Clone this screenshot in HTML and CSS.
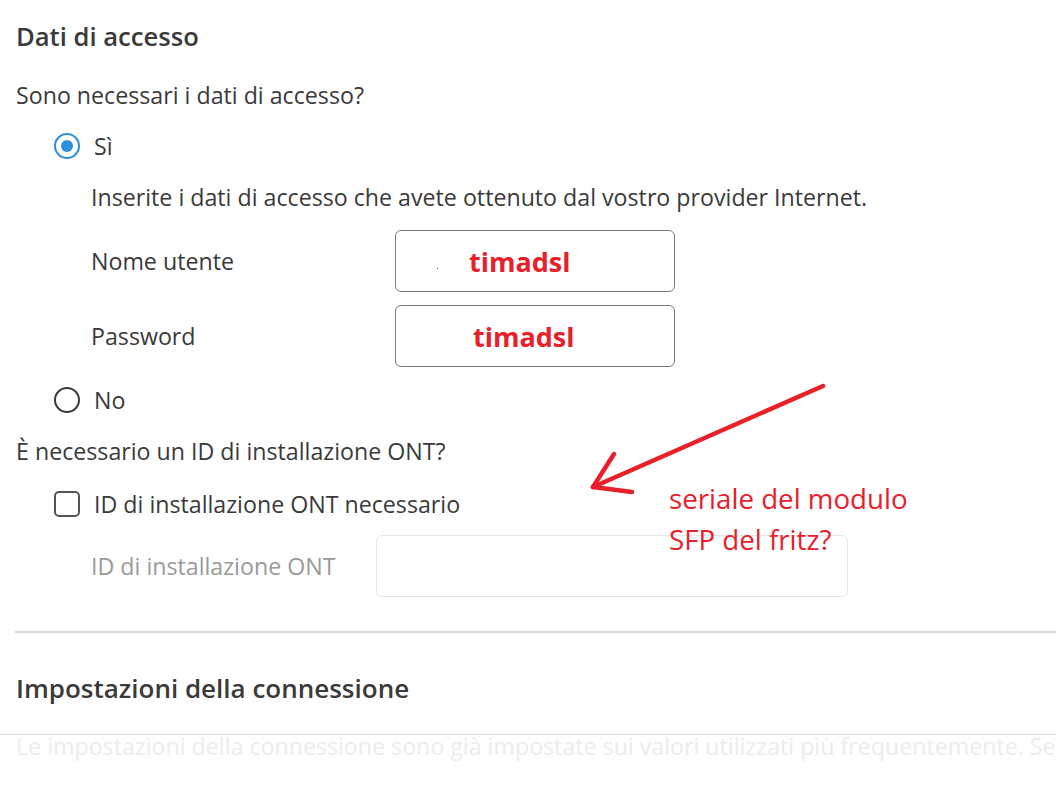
FILE: index.html
```html
<!DOCTYPE html>
<html lang="it">
<head>
<meta charset="utf-8">
<title>Dati di accesso</title>
<link rel="stylesheet" href="styles.css">
</head>
<body>
<div class="page">
  <section class="section">
    <h2 class="heading">Dati di accesso</h2>
    <p class="question">Sono necessari i dati di accesso?</p>
    <div class="options">
      <div class="option">
        <span class="radio checked"></span><span class="opt-label">Sì</span>
      </div>
      <div class="sub">
        <p class="hint">Inserite i dati di accesso che avete ottenuto dal vostro provider Internet.</p>
        <div class="field first">
          <span class="field-label">Nome utente</span>
          <div class="input"><span class="dot"></span><span class="value">timadsl</span></div>
        </div>
        <div class="field">
          <span class="field-label">Password</span>
          <div class="input"><span class="value v2">timadsl</span></div>
        </div>
      </div>
      <div class="option opt-no">
        <span class="radio"></span><span class="opt-label">No</span>
      </div>
    </div>
    <p class="question q2">È necessario un ID di installazione ONT?</p>
    <div class="options">
      <div class="option opt-check">
        <span class="checkbox"></span><span class="opt-label">ID di installazione ONT necessario</span>
      </div>
      <div class="field disabled">
        <span class="field-label">ID di installazione ONT</span>
        <div class="input wide"></div>
      </div>
    </div>
  </section>
  <hr class="divider">
  <section class="section">
    <h2 class="heading h2b">Impostazioni della connessione</h2>
  </section>
  <div class="faded">Le impostazioni della connessione sono già impostate sui valori utilizzati più frequentemente. Se</div>

  <svg class="arrow" width="1056" height="785" viewBox="0 0 1056 785">
    <g stroke="#e8202a" stroke-width="4.5" stroke-linecap="round" fill="none">
      <line x1="823" y1="386" x2="593" y2="487"/>
      <line x1="593" y1="487" x2="614" y2="454"/>
      <line x1="593" y1="487" x2="632" y2="492"/>
    </g>
  </svg>
  <div class="note">seriale del modulo<br>SFP del fritz?</div>
</div>
</body>
</html>
```
FILE: styles.css
```css
html, body {
  margin: 0;
  padding: 0;
  background: #fff;
}
body {
  font-family: "Open Sans", Lato, "Liberation Sans", sans-serif;
  font-size: 23.2px;
  line-height: 26px;
  color: #3a3a3a;
  width: 1056px;
  height: 785px;
  overflow: hidden;
}
.page {
  position: relative;
  width: 1056px;
  height: 785px;
  overflow: hidden;
}
.section {
  padding-left: 16px;
}
.heading {
  margin: 0;
  padding-top: 22px;
  font-size: 25.6px;
  font-weight: 600;
  line-height: 30px;
  color: #3a3a3a;
}
.question {
  margin: 0;
  margin-top: 30px;
  line-height: 26px;
}
.q2 {
  margin-top: 25px;
}
.options {
  padding-left: 38px;
}
.option {
  display: flex;
  align-items: center;
  height: 26px;
  margin-top: 25px;
}
.opt-no {
  margin-top: 20px;
}
.opt-check {
  margin-top: 27px;
}
.radio {
  width: 26px;
  height: 26px;
  box-sizing: border-box;
  border: 2.5px solid #3a3a3a;
  border-radius: 50%;
  flex: none;
  position: relative;
}
.radio.checked {
  border-color: #2b8fde;
}
.radio.checked::after {
  content: "";
  position: absolute;
  left: 4.5px;
  top: 4.5px;
  width: 12px;
  height: 12px;
  border-radius: 50%;
  background: #2b8fde;
}
.checkbox {
  width: 26px;
  height: 26px;
  box-sizing: border-box;
  border: 2.5px solid #555;
  border-radius: 5px;
  flex: none;
}
.opt-label {
  margin-left: 14px;
}
.sub {
  padding-left: 37px;
}
.hint {
  margin: 0;
  margin-top: 25px;
}
.field {
  display: flex;
  align-items: center;
  margin-top: 13px;
}
.field.first {
  margin-top: 20px;
}
.field-label {
  width: 304px;
  flex: none;
}
.input {
  width: 280px;
  height: 62px;
  box-sizing: border-box;
  border: 1.5px solid #7a7a7a;
  border-radius: 6px;
  display: flex;
  align-items: center;
  position: relative;
}
.value {
  margin-left: 73px;
  font-family: "Open Sans", "Noto Sans", sans-serif;
  font-weight: 700;
  font-size: 27px;
  line-height: 30px;
  color: #e8202a;
  margin-top: 2px;
}
.v2 {
  margin-left: 77px;
}
.dot {
  position: absolute;
  left: 41px;
  top: 37px;
  width: 1px;
  height: 1px;
  background: #e8202a;
}
.disabled {
  margin-top: 18px;
  padding-left: 37px;
}
.disabled .field-label {
  width: 285px;
  color: #9a9a9a;
}
.input.wide {
  width: 472px;
  border: 1px solid #e6e6e6;
}
.divider {
  margin: 34px 0 0 15px;
  border: 0;
  border-top: 2px solid #d6d6d6;
  height: 0;
}
.h2b {
  padding-top: 40px;
  font-size: 26px;
}
.faded {
  margin-top: 31px;
  border-top: 1px solid #dcdcdc;
  padding-left: 16px;
  line-height: 22px;
  color: #ececec;
  white-space: nowrap;
}
.arrow {
  position: absolute;
  left: 0;
  top: 0;
  pointer-events: none;
}
.note {
  position: absolute;
  left: 669px;
  top: 478px;
  font-family: "Open Sans", "Noto Sans", sans-serif;
  font-size: 27.7px;
  line-height: 41px;
  color: #e8202a;
}
```
